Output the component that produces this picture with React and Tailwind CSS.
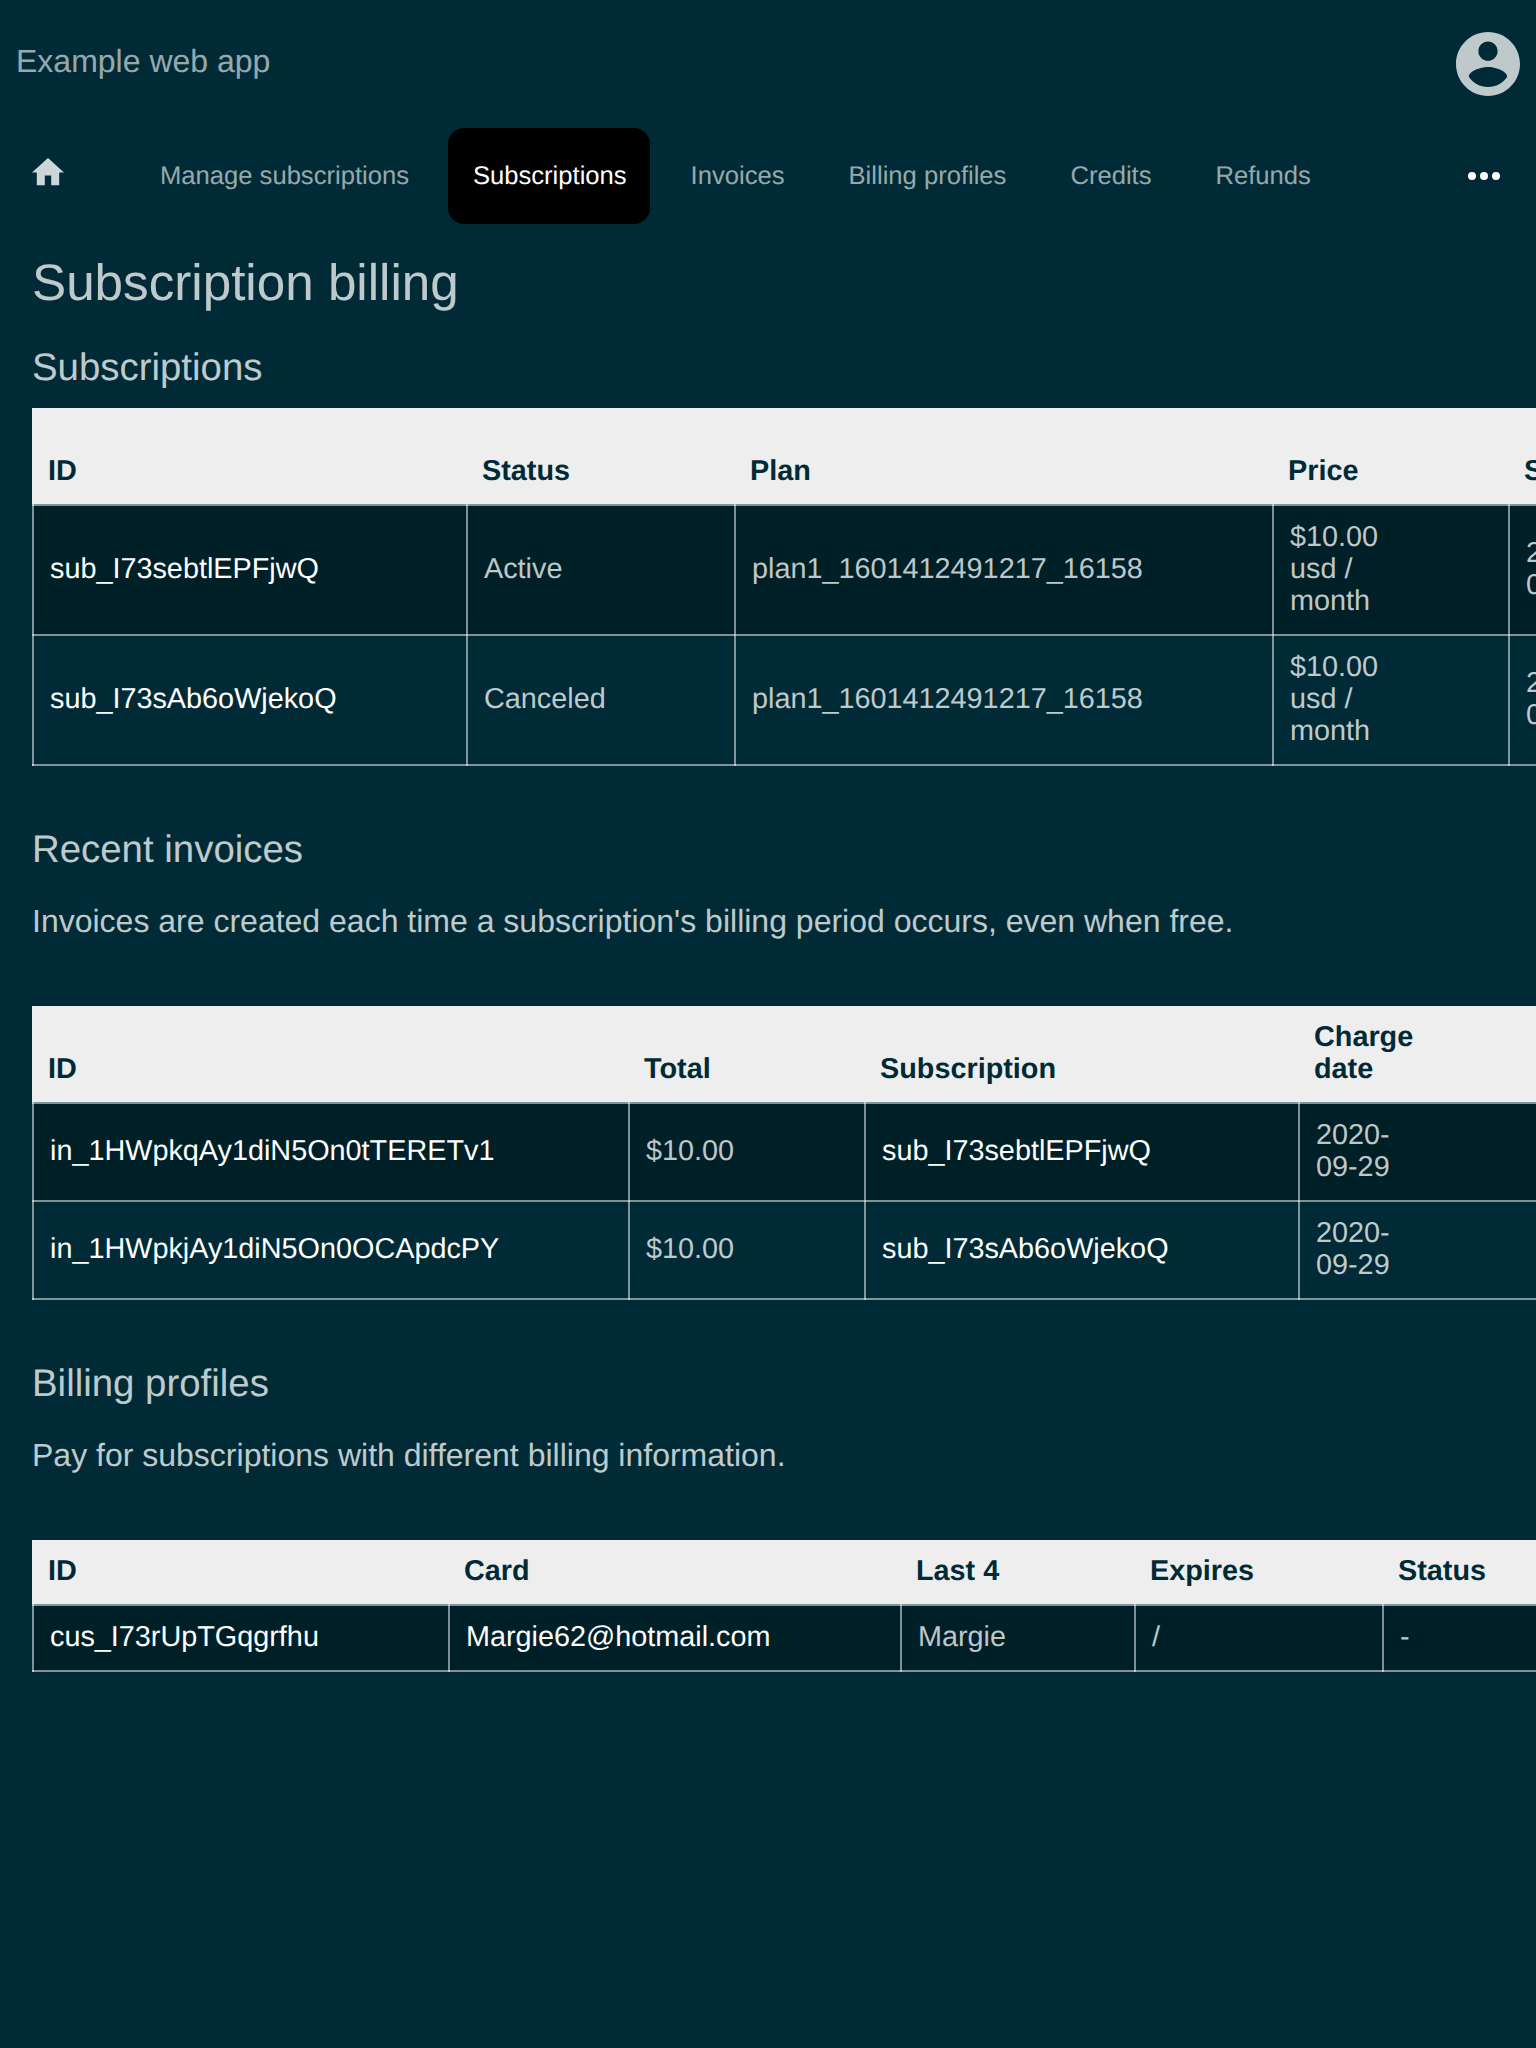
const navItems = ['Manage subscriptions', 'Subscriptions', 'Invoices', 'Billing profiles', 'Credits', 'Refunds'];

function HomeIcon() {
  return (
    <svg viewBox="2 3 20 17" className="h-[27.2px] w-8 fill-white/80">
      <path d="M10 20v-6h4v6h5v-8h3L12 3 2 12h3v8z" />
    </svg>
  );
}

function AccountIcon() {
  return (
    <svg viewBox="2 2 20 20" className="size-16 fill-white/75">
      <path d="M12 2C6.48 2 2 6.48 2 12s4.48 10 10 10 10-4.48 10-10S17.52 2 12 2zm0 3c1.66 0 3 1.34 3 3s-1.34 3-3 3-3-1.34-3-3 1.34-3 3-3zm0 14.2c-2.5 0-4.71-1.28-6-3.22.03-1.99 4-3.08 6-3.08 1.99 0 5.97 1.09 6 3.08-1.29 1.94-3.5 3.22-6 3.22z" />
    </svg>
  );
}

function DotsIcon() {
  return (
    <svg viewBox="0 0 32 8" className="h-2 w-8 fill-white">
      <circle cx="4" cy="4" r="4" />
      <circle cx="16" cy="4" r="4" />
      <circle cx="28" cy="4" r="4" />
    </svg>
  );
}

function Link({ children }) {
  return <a className="text-white">{children}</a>;
}

function DataTable({ widths, width, headers, rows, tallHeader }) {
  return (
    <div
      className={
        tallHeader
          ? 'bg-[linear-gradient(#eee,#eee)] bg-[length:2px_96px] bg-no-repeat'
          : 'bg-[linear-gradient(#eee,#eee)] bg-[length:2px_64px] bg-no-repeat'
      }
    >
      <table
        className="table-fixed border-collapse text-left text-[28.8px] leading-8"
        style={{ width }}
      >
        <colgroup>
          {widths.map((w, i) => (
            <col key={i} style={{ width: w }} />
          ))}
        </colgroup>
        <thead>
          <tr className={tallHeader ? 'h-[97px]' : 'h-[65px]'}>
            {headers.map((h, i) => (
              <th
                key={i}
                className="bg-[#eee] bg-clip-padding px-[15px] pt-[15px] pb-[17px] align-bottom font-bold text-[#002b36]"
              >
                {h}
              </th>
            ))}
          </tr>
        </thead>
        <tbody>
          {rows.map((row, r) => (
            <tr key={r} className="odd:bg-black/25">
              {row.map((cell, i) => (
                <td key={i} className="border-2 border-white/50 pt-[15px] pr-[14px] pb-[17px] pl-4 align-middle">
                  {cell}
                </td>
              ))}
            </tr>
          ))}
        </tbody>
      </table>
    </div>
  );
}

const price = (
  <>
    $10.00
    <br />
    usd /
    <br />
    month
  </>
);
const date = (
  <>
    2020-
    <br />
    09-29
  </>
);

export default function App() {
  return (
    <div
      className="h-[2048px] w-full overflow-hidden bg-[#002b36] text-white/75 [text-rendering:geometricPrecision]"
      style={{ fontFamily: '"Liberation Sans", Arial, sans-serif' }}
    >
      <header className="flex h-32 items-center justify-between px-4">
        <div className="-mt-1.5 text-[32px] leading-10 text-white/60">Example web app</div>
        <AccountIcon />
      </header>
      <nav className="flex h-24 items-center pr-9 pl-8 text-[25.6px] text-white/60">
        <div className="-mt-2 w-[103px]">
          <HomeIcon />
        </div>
        <div className="flex flex-1 gap-4">
          {navItems.map((item) => (
            <a
              key={item}
              className={
                item === 'Subscriptions'
                  ? 'rounded-2xl bg-black pr-[23px] pl-[25px] leading-[96px] text-white'
                  : 'pr-[23px] pl-[25px] leading-[96px]'
              }
            >
              {item}
            </a>
          ))}
        </div>
        <DotsIcon />
      </nav>
      <main className="pl-8">
        <h1 className="pt-[27px] text-[51.2px] leading-[64px]">Subscription billing</h1>
        <h2 className="mt-[29px] text-[38.4px] leading-[48px]">Subscriptions</h2>
        <div className="mt-4">
          <DataTable
            tallHeader
            width={1741}
            widths={[434, 268, 538, 236, 265]}
            headers={['ID', 'Status', 'Plan', 'Price', 'Start']}
            rows={[
              [<Link>sub_I73sebtlEPFjwQ</Link>, 'Active', 'plan1_1601412491217_16158', price, date],
              [<Link>sub_I73sAb6oWjekoQ</Link>, 'Canceled', 'plan1_1601412491217_16158', price, date],
            ]}
          />
        </div>
        <h2 className="mt-[60px] text-[38.4px] leading-[48px]">Recent invoices</h2>
        <p className="mt-[27px] text-[32px] leading-10">
          Invoices are created each time a subscription's billing period occurs, even when free.
        </p>
        <div className="mt-[65px]">
          <DataTable
            tallHeader
            width={1766}
            widths={[596, 236, 434, 500]}
            headers={['ID', 'Total', 'Subscription', <>Charge<br />date</>]}
            rows={[
              [<Link>in_1HWpkqAy1diN5On0tTERETv1</Link>, '$10.00', <Link>sub_I73sebtlEPFjwQ</Link>, date],
              [<Link>in_1HWpkjAy1diN5On0OCApdcPY</Link>, '$10.00', <Link>sub_I73sAb6oWjekoQ</Link>, date],
            ]}
          />
        </div>
        <h2 className="mt-[60px] text-[38.4px] leading-[48px]">Billing profiles</h2>
        <p className="mt-[27px] text-[32px] leading-10">Pay for subscriptions with different billing information.</p>
        <div className="mt-[65px]">
          <DataTable
            width={1750}
            widths={[416, 452, 234, 248, 400]}
            headers={['ID', 'Card', 'Last 4', 'Expires', 'Status']}
            rows={[[<Link>cus_I73rUpTGqgrfhu</Link>, <Link>Margie62@hotmail.com</Link>, 'Margie', '/', '-']]}
          />
        </div>
      </main>
    </div>
  );
}
